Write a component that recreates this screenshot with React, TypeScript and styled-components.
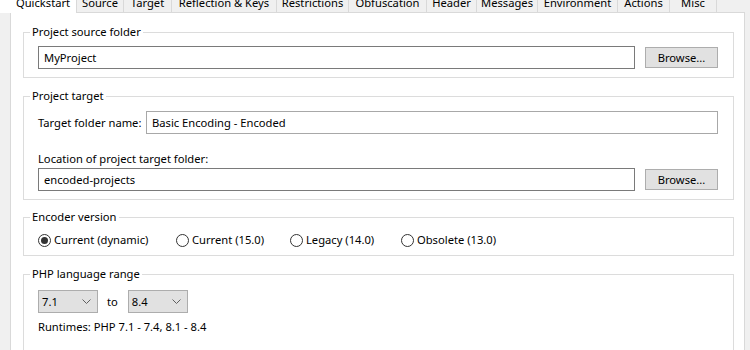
import React from "react";
import styled, { createGlobalStyle } from "styled-components";

const FS = "11.2px";

const Global = createGlobalStyle`
  html, body { margin: 0; padding: 0; background: #f0f0f0; }
  body { font-family: "Noto Sans", "Segoe UI", sans-serif; font-size: ${FS}; color: #000; overflow: hidden; }
  * { box-sizing: border-box; }
`;

const Window = styled.div`
  width: 750px;
  height: 350px;
  display: flex;
  flex-direction: column;
  background: #f0f0f0;
  overflow: hidden;
`;

const TabStrip = styled.div`
  display: flex;
  height: 12px;
  align-items: flex-start;
`;

const Tab = styled.div<{ $w: number; $active?: boolean }>`
  position: relative;
  z-index: ${(p) => (p.$active ? 1 : 0)};
  flex: 0 0 ${(p) => p.$w}px;
  height: ${(p) => (p.$active ? 13 : 12)}px;
  padding-left: ${(p) => (p.$active ? 10 : 0)}px;
  background: ${(p) => (p.$active ? "#ffffff" : "#f0f0f0")};
  border-right: 1px solid #d9d9d9;
  overflow: hidden;
  text-align: center;
`;

const TabLabel = styled.span`
  display: block;
  margin-top: -5px;
  line-height: 16px;
  white-space: nowrap;
`;

const Page = styled.div`
  margin-left: 10px;
  width: 735px;
  flex: 1;
  background: #ffffff;
  border: 1px solid #d9d9d9;
  border-bottom: none;
  display: flex;
  flex-direction: column;
  padding: 11px 10px 0 12px;
  gap: 10px;
`;

const Group = styled.fieldset<{ $pt: number; $pb: number; $mt?: number }>`
  margin: ${(p) => p.$mt ?? 0}px 0 0 0;
  border: 1px solid #dcdcdc;
  padding: ${(p) => p.$pt}px 15px ${(p) => p.$pb}px 14px;
  min-width: 0;
  display: flex;
  flex-direction: column;
`;

const Legend = styled.legend`
  margin-left: -8px;
  padding: 0 2px;
  line-height: 16px;
  font-size: ${FS};
`;

const Row = styled.div<{ $mt?: number }>`
  display: flex;
  align-items: center;
  margin-top: ${(p) => p.$mt ?? 0}px;
`;

const TextBox = styled.div<{ $soft?: boolean }>`
  flex: 1;
  height: 23px;
  border: 1px solid ${(p) => (p.$soft ? "#a8a8a8" : "#7a7a7a")};
  background: #fff;
  padding-left: 5px;
  display: flex;
  align-items: center;
  line-height: 16px;
  white-space: nowrap;
`;

const Button = styled.div`
  flex: 0 0 73px;
  height: 21px;
  margin-left: 10px;
  background: #e1e1e1;
  border: 1px solid #adadad;
  display: flex;
  align-items: center;
  justify-content: center;
  line-height: 16px;
`;

const FieldLabel = styled.span<{ $w?: number }>`
  ${(p) => (p.$w ? `flex: 0 0 ${p.$w}px;` : "")}
  line-height: 16px;
  white-space: nowrap;
`;

const Caption = styled.div<{ $mt: number }>`
  margin-top: ${(p) => p.$mt}px;
  margin-bottom: 1px;
  line-height: 16px;
`;

const RadioItem = styled.div<{ $w?: number }>`
  ${(p) => (p.$w ? `flex: 0 0 ${p.$w}px;` : "")}
  display: flex;
  align-items: center;
  gap: 3px;
  line-height: 16px;
  white-space: nowrap;
`;

const RadioCircle = styled.span<{ $checked?: boolean }>`
  width: 13px;
  height: 13px;
  border-radius: 50%;
  border: 1px solid #333333;
  background: #fff;
  display: flex;
  align-items: center;
  justify-content: center;
  &::after {
    content: "";
    width: 7px;
    height: 7px;
    border-radius: 50%;
    background: ${(p) => (p.$checked ? "#333333" : "transparent")};
  }
`;

const Combo = styled.div`
  flex: 0 0 60px;
  height: 23px;
  background: #e1e1e1;
  border: 1px solid #adadad;
  display: flex;
  align-items: center;
  justify-content: space-between;
  padding: 0 6px 0 3px;
  line-height: 16px;
`;

const ToLabel = styled.span`
  margin: 0 10px 0 9px;
  line-height: 16px;
`;

const Runtimes = styled.div`
  margin-top: 6px;
  line-height: 16px;
`;

const Chevron = () => (
  <svg width="9" height="5" viewBox="0 0 9 5">
    <path d="M0.5 0.5 L4.5 4.5 L8.5 0.5" fill="none" stroke="#606060" strokeWidth="1" />
  </svg>
);

const tabs: [string, number][] = [
  ["Quickstart", 77],
  ["Source", 47],
  ["Target", 48],
  ["Reflection & Keys", 105],
  ["Restrictions", 72],
  ["Obfuscation", 78],
  ["Header", 50],
  ["Messages", 61],
  ["Environment", 80],
  ["Actions", 52],
  ["Misc", 47],
];

const radios: [string, number | undefined, boolean][] = [
  ["Current (dynamic)", 138, true],
  ["Current (15.0)", 114, false],
  ["Legacy (14.0)", 111, false],
  ["Obsolete (13.0)", undefined, false],
];

export default function App() {
  return (
    <Window>
      <Global />
      <TabStrip>
        {tabs.map(([name, w], i) => (
          <Tab key={name} $w={w} $active={i === 0}>
            <TabLabel>{name}</TabLabel>
          </Tab>
        ))}
      </TabStrip>
      <Page>
        <Group $pt={6} $pb={8}>
          <Legend>Project source folder</Legend>
          <Row>
            <TextBox>MyProject</TextBox>
            <Button>Browse...</Button>
          </Row>
        </Group>
        <Group $pt={7} $pb={8}>
          <Legend>Project target</Legend>
          <Row>
            <FieldLabel $w={108}>Target folder name:</FieldLabel>
            <TextBox $soft>Basic Encoding - Encoded</TextBox>
          </Row>
          <Caption $mt={17}>Location of project target folder:</Caption>
          <Row>
            <TextBox>encoded-projects</TextBox>
            <Button>Browse...</Button>
          </Row>
        </Group>
        <Group $pt={7} $pb={7} $mt={-1}>
          <Legend>Encoder version</Legend>
          <Row>
            {radios.map(([label, w, checked]) => (
              <RadioItem key={label} $w={w}>
                <RadioCircle $checked={checked} />
                {label}
              </RadioItem>
            ))}
          </Row>
        </Group>
        <Group $pt={8} $pb={40}>
          <Legend>PHP language range</Legend>
          <Row>
            <Combo>
              7.1
              <Chevron />
            </Combo>
            <ToLabel>to</ToLabel>
            <Combo>
              8.4
              <Chevron />
            </Combo>
          </Row>
          <Runtimes>Runtimes: PHP 7.1 - 7.4, 8.1 - 8.4</Runtimes>
        </Group>
      </Page>
    </Window>
  );
}
